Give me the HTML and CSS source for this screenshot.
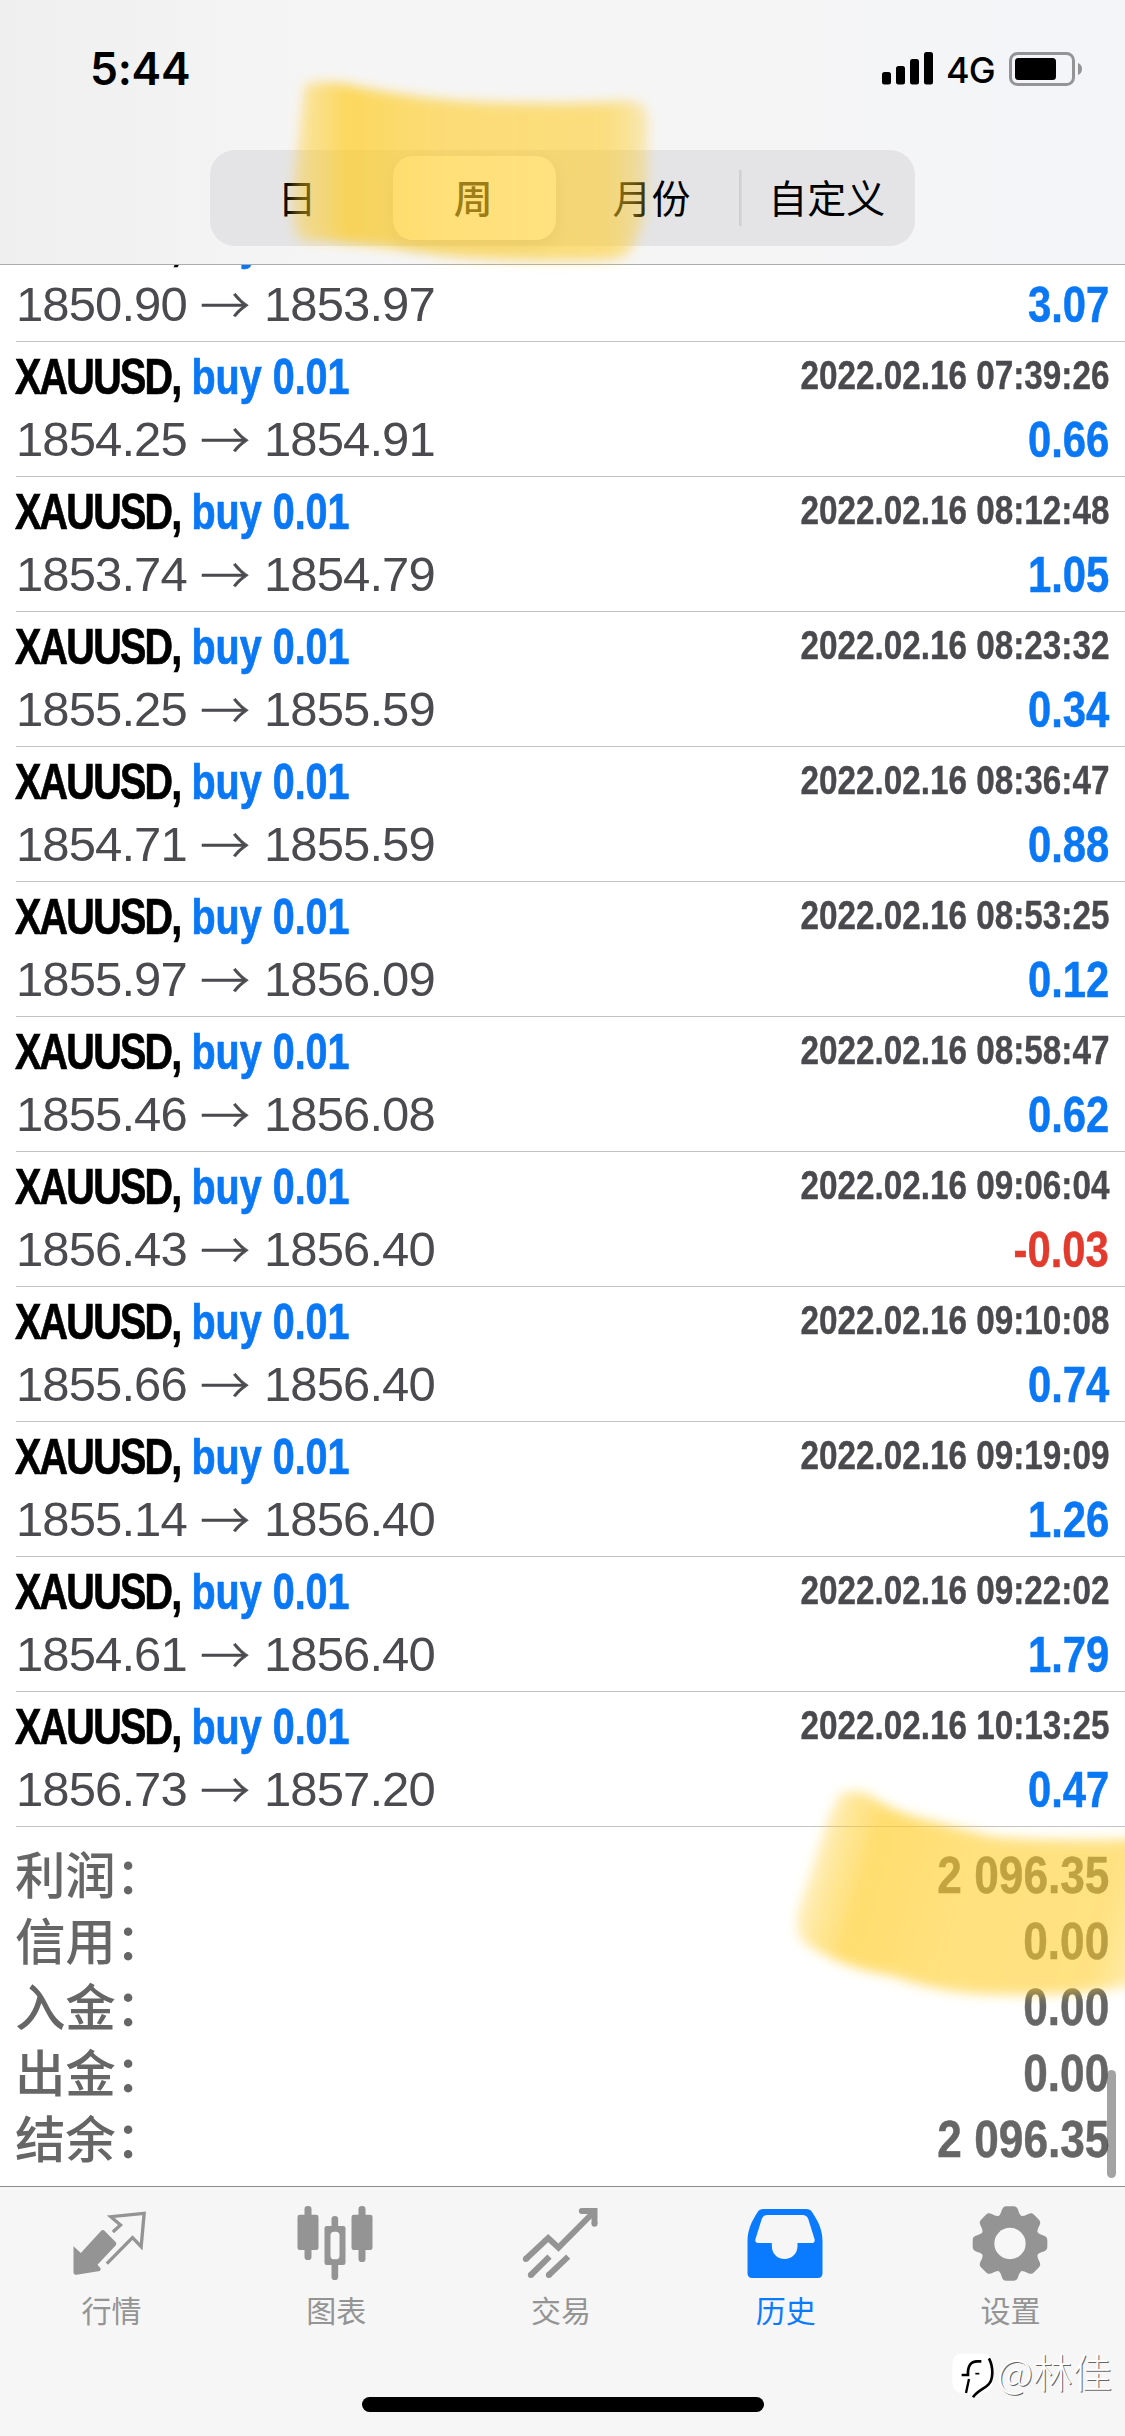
FILE: index.html
```html
<!DOCTYPE html>
<html lang="zh-CN">
<head>
<meta charset="utf-8">
<title>历史</title>
<link rel="stylesheet" href="styles.css">
</head>
<body>
<div class="screen">
  <header class="header">
    <div class="status">
      <span class="time">5:44</span>
      <div class="status-right">
        <svg class="signal" width="52" height="34" viewBox="0 0 52 34"><rect x="0" y="20" width="9" height="12.500" rx="2.500"/><rect x="14" y="14" width="9" height="18.500" rx="2.500"/><rect x="28" y="7" width="9" height="25.500" rx="2.500"/><rect x="42" y="0" width="9" height="32.500" rx="2.500"/></svg>
        <span class="network">4G</span>
        <svg class="battery" width="74" height="34" viewBox="0 0 74 34"><rect x="1.500" y="1.500" width="63" height="31" rx="7" fill="none" stroke="#949496" stroke-width="3"/><rect x="6" y="6" width="41" height="22" rx="3.500"/><path d="M69 11a6.500 6.500 0 0 1 0 12z" fill="#949496"/></svg>
      </div>
    </div>
    <nav class="segments">
      <span class="segment">日</span>
      <span class="segment active">周</span>
      <span class="segment">月份</span>
      <span class="segment divided">自定义</span>
    </nav>
  </header>

  <main class="content">
    <ul class="deals">
      <li class="deal"><div class="line"><span class="title"><b>XAUUSD,</b> buy 0.01</span></div><div class="line prices"><span>1850.90</span><i>→</i><span>1853.97</span><em>3.07</em></div></li>
      <li class="deal"><div class="line"><span class="title"><b>XAUUSD,</b> buy 0.01</span><time>2022.02.16 07:39:26</time></div><div class="line prices"><span>1854.25</span><i>→</i><span>1854.91</span><em>0.66</em></div></li>
      <li class="deal"><div class="line"><span class="title"><b>XAUUSD,</b> buy 0.01</span><time>2022.02.16 08:12:48</time></div><div class="line prices"><span>1853.74</span><i>→</i><span>1854.79</span><em>1.05</em></div></li>
      <li class="deal"><div class="line"><span class="title"><b>XAUUSD,</b> buy 0.01</span><time>2022.02.16 08:23:32</time></div><div class="line prices"><span>1855.25</span><i>→</i><span>1855.59</span><em>0.34</em></div></li>
      <li class="deal"><div class="line"><span class="title"><b>XAUUSD,</b> buy 0.01</span><time>2022.02.16 08:36:47</time></div><div class="line prices"><span>1854.71</span><i>→</i><span>1855.59</span><em>0.88</em></div></li>
      <li class="deal"><div class="line"><span class="title"><b>XAUUSD,</b> buy 0.01</span><time>2022.02.16 08:53:25</time></div><div class="line prices"><span>1855.97</span><i>→</i><span>1856.09</span><em>0.12</em></div></li>
      <li class="deal"><div class="line"><span class="title"><b>XAUUSD,</b> buy 0.01</span><time>2022.02.16 08:58:47</time></div><div class="line prices"><span>1855.46</span><i>→</i><span>1856.08</span><em>0.62</em></div></li>
      <li class="deal"><div class="line"><span class="title"><b>XAUUSD,</b> buy 0.01</span><time>2022.02.16 09:06:04</time></div><div class="line prices"><span>1856.43</span><i>→</i><span>1856.40</span><em class="loss">-0.03</em></div></li>
      <li class="deal"><div class="line"><span class="title"><b>XAUUSD,</b> buy 0.01</span><time>2022.02.16 09:10:08</time></div><div class="line prices"><span>1855.66</span><i>→</i><span>1856.40</span><em>0.74</em></div></li>
      <li class="deal"><div class="line"><span class="title"><b>XAUUSD,</b> buy 0.01</span><time>2022.02.16 09:19:09</time></div><div class="line prices"><span>1855.14</span><i>→</i><span>1856.40</span><em>1.26</em></div></li>
      <li class="deal"><div class="line"><span class="title"><b>XAUUSD,</b> buy 0.01</span><time>2022.02.16 09:22:02</time></div><div class="line prices"><span>1854.61</span><i>→</i><span>1856.40</span><em>1.79</em></div></li>
      <li class="deal"><div class="line"><span class="title"><b>XAUUSD,</b> buy 0.01</span><time>2022.02.16 10:13:25</time></div><div class="line prices"><span>1856.73</span><i>→</i><span>1857.20</span><em>0.47</em></div></li>
    </ul>
    <dl class="summary">
      <div><dt>利润：</dt><dd>2 096.35</dd></div>
      <div><dt>信用：</dt><dd>0.00</dd></div>
      <div><dt>入金：</dt><dd>0.00</dd></div>
      <div><dt>出金：</dt><dd>0.00</dd></div>
      <div><dt>结余：</dt><dd>2 096.35</dd></div>
    </dl>
    <span class="scrollbar"></span>
  </main>

  <footer class="tabbar">
    <nav class="tabs">
      <a class="tab">
        <svg viewBox="31.5 30 252 234"><path d="M45 154 67 174 128 107q5-4 10 0L172 142q3 5 0 9L117 209 127 221 124 228 54 239q-9 1-9-8z" fill="currentColor"/><path d="M163 111 186 90 157 65 257 55 248 155 222 128 145 206" fill="none" stroke="currentColor" stroke-width="10"/></svg>
        <span>行情</span>
      </a>
      <a class="tab">
        <svg viewBox="706.5 30 252 234"><g fill="currentColor"><rect x="717" y="59" width="63" height="106" rx="7"/><rect x="738" y="33" width="21" height="162" rx="10"/><rect x="879" y="59" width="63" height="106" rx="7"/><rect x="900" y="33" width="21" height="168" rx="10"/><rect x="798" y="93" width="63" height="117" rx="7"/><rect x="819" y="63" width="20" height="192" rx="10"/></g><rect x="816" y="110" width="27" height="83" rx="11" fill="#f7f7f7"/></svg>
        <span>图表</span>
      </a>
      <a class="tab">
        <svg viewBox="61.5 30 252 234"><g fill="none" stroke="currentColor" stroke-width="18"><path d="M82 192 149 129 180 158 286 51"/><path d="M250 48h38v38M97 240 153 185M151 240 209 185"/><path d="M82 192h.1M97 240h.1M151 240h.1M250 48h.1M288 86h.1" stroke-linecap="round"/></g></svg>
        <span>交易</span>
      </a>
      <a class="tab current">
        <svg viewBox="736.5 30 252 234"><path fill="currentColor" fill-rule="evenodd" d="M795 42H923Q935 42 941 52C960 80 972 105 972 140V235Q972 249 958 249H761Q747 249 747 235V140C747 105 759 80 777 52Q783 42 795 42ZM807 60Q795 60 790 71L771 132Q768 144 779 144H820V153C820 176 836 192 858 192S897 176 897 153V144H939Q951 144 948 132L929 71Q924 60 912 60Z"/></svg>
        <span>历史</span>
      </a>
      <a class="tab">
        <svg viewBox="91.5 30 252 234"><defs><path id="tooth" d="M-37-80C-21-90-29-112-10-112H10C29-112 21-90 37-80Z"/></defs><g transform="translate(214.500 145.500)" fill="currentColor"><circle r="88"/><use href="#tooth"/><use href="#tooth" transform="rotate(45)"/><use href="#tooth" transform="rotate(90)"/><use href="#tooth" transform="rotate(135)"/><use href="#tooth" transform="rotate(180)"/><use href="#tooth" transform="rotate(225)"/><use href="#tooth" transform="rotate(270)"/><use href="#tooth" transform="rotate(315)"/><circle r="47" fill="#f7f7f7"/></g></svg>
        <span>设置</span>
      </a>
    </nav>
    <div class="home-indicator"></div>
    <div class="watermark">
      <svg width="42" height="46" viewBox="36 474 126 138"><path d="M60 476H130Q158 476 158 510V560Q155 590 128 594L100 610 96 596H65Q37 590 37 560V510Q37 478 60 476Z" fill="#fff"/><g fill="none" stroke="#000"><path d="M65 540H84Q82 499 112 499H124" stroke-width="8"/><path d="M87 552 78 594" stroke-width="7"/><path d="M147 490C162 520 159 555 145 569S112 587 99 607" stroke-width="8"/><path d="M106 536h12" stroke-width="5"/></g></svg>
      <span>@林佳</span>
    </div>
  </footer>

  <svg class="marker" width="1125" height="2436" viewBox="0 0 1125 2436">
    <defs>
      <filter id="soft" x="-10%" y="-20%" width="120%" height="140%"><feGaussianBlur stdDeviation="6"/></filter>
      <linearGradient id="ink-top"><stop offset="0" stop-color="#ffcc25" stop-opacity=".35"/><stop offset=".15" stop-color="#ffcc25" stop-opacity=".72"/><stop offset=".4" stop-color="#ffcc25" stop-opacity=".62"/><stop offset=".88" stop-color="#ffcc25" stop-opacity=".58"/><stop offset="1" stop-color="#ffcc25" stop-opacity=".32"/></linearGradient>
      <linearGradient id="ink-bottom" gradientUnits="userSpaceOnUse" x1="808" y1="1870" x2="1128" y2="1960"><stop offset="0" stop-color="#ffcc25" stop-opacity=".3"/><stop offset=".17" stop-color="#ffcc25" stop-opacity=".66"/><stop offset=".5" stop-color="#ffcc25" stop-opacity=".59"/><stop offset=".9" stop-color="#ffcc25" stop-opacity=".58"/><stop offset="1" stop-color="#ffcc25" stop-opacity=".42"/></linearGradient>
    </defs>
    <path filter="url(#soft)" fill="url(#ink-top)" d="M305 84Q330 79 360 87Q420 99 480 102Q560 105 625 101Q648 100 648 120L647 200Q643 230 632 248Q628 260 600 260Q500 262 440 255Q370 243 300 240Q290 225 293 185Z"/>
    <path filter="url(#soft)" fill="url(#ink-bottom)" d="M840 1794Q858 1787 874 1798Q890 1810 920 1818L990 1836Q1040 1842 1150 1839V1981Q1080 1998 980 1994Q930 1990 893 1976Q840 1968 802 1941Q792 1925 802 1900L828 1820Z"/>
  </svg>
</div>
</body>
</html>
```
FILE: styles.css
```css
* { box-sizing: border-box; margin: 0; padding: 0; }

body {
  width: 1125px;
  background: #fff;
  font-family: "Liberation Sans", "Noto Sans CJK SC", sans-serif;
}

.screen {
  position: relative;
  display: flex;
  flex-direction: column;
  width: 1125px;
  height: 2436px;
  overflow: hidden;
}

/* Header */
.header {
  flex: none;
  height: 265px;
  padding-top: 42px;
  border-bottom: 1px solid #acacae;
  background: linear-gradient(90deg, #efeff0, #f6f5f6 28%, #f5f5f6 70%, #f4f5f9);
}

.status {
  display: flex;
  justify-content: space-between;
  align-items: center;
  height: 54px;
  padding: 0 42px 0 90px;
}

.time {
  font: 600 44.5px/54px "Inter", sans-serif;
  letter-spacing: -0.3px;
}

.status-right { display: flex; align-items: center; }
.network { margin: 2px 14px 0 12px; font: 500 36px/54px "Inter", sans-serif; letter-spacing: -0.9px; width: 49px; }

.segments {
  display: grid;
  grid-template-columns: repeat(4, 1fr);
  width: 705px;
  height: 96px;
  margin: 54px 0 0 210px;
  padding: 6px 0;
  border-radius: 25px;
  background: #e4e4e6;
}

.segment {
  display: flex;
  align-items: center;
  justify-content: center;
  padding: 0 2px 4px 0;
  font: 400 39px/1 "Noto Sans CJK SC", sans-serif;
}

.segment:nth-child(3) { padding: 0 0 4px 2px; }

.segment.active {
  margin: 0 7px;
  border-radius: 20px;
  background: #fff;
  box-shadow: 0 6px 16px rgba(0, 0, 0, .1);
  font-weight: 500;
}

.segment.divided {
  padding-right: 0;
  background: linear-gradient(#cfcfd1, #cfcfd1) 0 50% / 2.5px 56px no-repeat;
}

/* Deals */
.content { position: relative; flex: none; height: 1921px; overflow: hidden; }

.deals { list-style: none; margin-top: -58px; padding-left: 16px; }

.deal {
  height: 135px;
  padding-right: 16px;
  border-bottom: 1px solid #c3c3c5;
}

.line { display: flex; justify-content: space-between; height: 68px; line-height: 69px; }

.title {
  margin-left: -1px;
  color: #0a78f5;
  font-size: 49.5px;
  font-weight: 700;
  white-space: nowrap;
  -webkit-text-stroke: .7px currentColor;
  transform: scaleX(.798);
  transform-origin: 0 50%;
}

.title b { color: #000; letter-spacing: -2.2px; }

time {
  color: #4a4a4e;
  font-size: 40px;
  font-weight: 700;
  line-height: 67px;
  white-space: nowrap;
  -webkit-text-stroke: .4px currentColor;
  transform: scaleX(.832);
  transform-origin: 100% 50%;
}

.prices {
  justify-content: flex-start;
  height: 58px;
  line-height: 58px;
  color: #4b4b4f;
  font-size: 49px;
  letter-spacing: -.9px;
}

.prices span { width: 172px; }

.prices i {
  width: 76px;
  padding-left: 12px;
  font: 300 50px/54px "Noto Sans CJK SC", sans-serif;
  -webkit-text-stroke: .5px currentColor;
}

.prices em {
  margin-left: auto;
  color: #0a78f5;
  font-size: 49.5px;
  font-style: normal;
  font-weight: 700;
  line-height: 59px;
  letter-spacing: 0;
  -webkit-text-stroke: .5px currentColor;
  transform: scaleX(.845);
  transform-origin: 100% 50%;
}

.prices em.loss { color: #e23b2e; }

/* Totals */
.summary { padding: 15px 16px 0 15px; color: #666; }
.summary div { display: flex; justify-content: space-between; height: 66px; }
.summary dt { font: 500 50.5px/60px "Noto Sans CJK SC", sans-serif; letter-spacing: -.3px; }
.summary dd {
  font-size: 52px;
  font-weight: 700;
  line-height: 67px;
  -webkit-text-stroke: .5px currentColor;
  transform: scaleX(.85);
  transform-origin: 100% 50%;
}

.scrollbar {
  position: absolute;
  right: 9px;
  top: 1805px;
  width: 9px;
  height: 108px;
  border-radius: 5px;
  background: rgba(60, 60, 60, .47);
}

/* Tab bar */
.tabbar {
  position: relative;
  flex: 1;
  border-top: 1px solid #8c8c8c;
  background: #f6f6f6;
}

.tabs { display: grid; grid-template-columns: repeat(5, 1fr); padding: 18px 2px 0 0; margin-left: -1px; }

.tab { display: flex; flex-direction: column; align-items: center; color: #949494; }
.tab svg { width: 84px; height: 78px; }
.tab span { margin-top: 10px; font: 400 30px/32px "Noto Sans CJK SC", sans-serif; }
.tab.current { color: #0a7aff; }

.home-indicator {
  width: 402px;
  height: 15px;
  margin: 72px auto 0;
  border-radius: 8px;
  background: #000;
}

.watermark {
  position: absolute;
  left: 952px;
  top: 166px;
  display: flex;
  align-items: center;
  gap: 3px;
  color: #fff;
  font: 300 39.5px/46px "Noto Sans CJK SC", sans-serif;
  white-space: nowrap;
  text-shadow: 1px 1px 0 #666;
}

.watermark span { margin-top: -10px; }

/* Highlighter strokes */
.marker { position: absolute; left: 0; top: 0; pointer-events: none; }
```
